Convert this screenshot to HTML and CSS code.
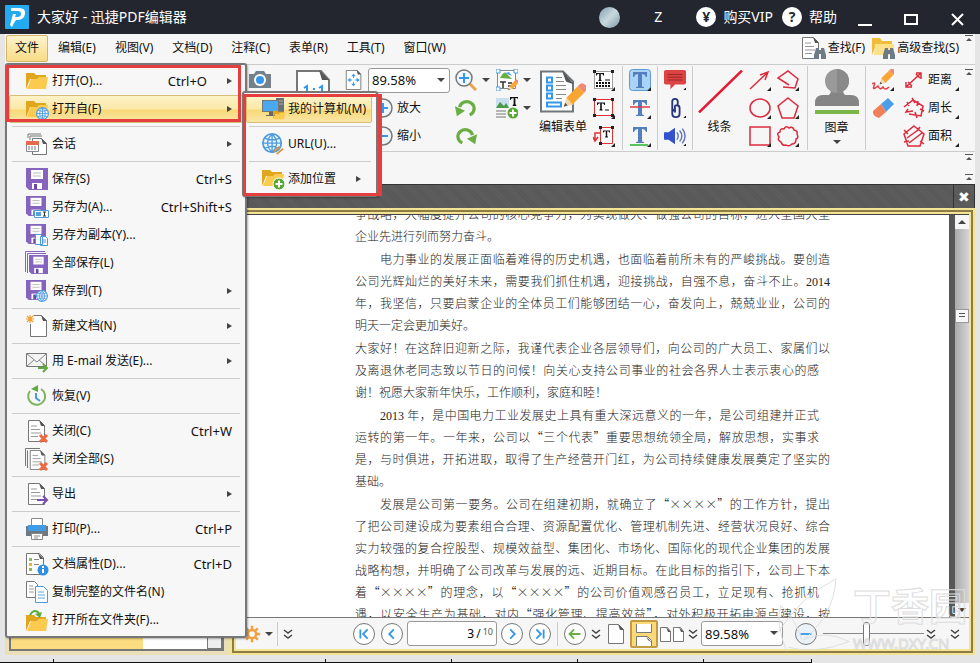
FILE: index.html
```html
<!DOCTYPE html>
<html lang="zh-CN">
<head>
  <meta charset="UTF-8" />
  <meta name="viewport" content="width=device-width, initial-scale=1.0"/>
  <title>大家好 - 迅捷PDF编辑器</title>
  <link rel="stylesheet" href="styles.css">
</head>
<body>
  <!-- shared icons -->
  <svg class="sprite" aria-hidden="true">
    <symbol id="folder" viewBox="0 0 22 22">
      <path d="M0 3h8l2 2h10v4H4L0 19z" fill="#dfa61e"/>
      <path d="M5 9h6l2-2h9l-2 12H1z" fill="#fbcb50"/>
    </symbol>
    <symbol id="globe" viewBox="0 0 22 22">
      <circle cx="11" cy="11" r="10" fill="#eef6fd" stroke="#4f9de0" stroke-width="2"/>
      <path d="M1 11h20M11 1v20M3 5.500q8 4 16 0M3 16.500q8-4 16 0M11 1q-10 10 0 20M11 1q10 10 0 20" fill="none" stroke="#4f9de0" stroke-width="1.500"/>
    </symbol>
    <symbol id="floppy" viewBox="0 0 22 22">
      <path d="M0 0h22v22H3l-3-3z" fill="#8763c0"/>
      <path d="M5 2h12v9H5z" fill="#fff"/>
      <path d="M7 5h8M7 8h8" stroke="#bbb"/>
      <path d="M6 15h10v6H6z" fill="#fff"/>
      <path d="M8 16h3v5H8z" fill="#6b47a8"/>
    </symbol>
    <symbol id="page" viewBox="0 0 22 22">
      <path d="M2.500.500h11l5 5v16h-16z" fill="#fff" stroke="#777"/>
      <path d="M13 0l6 6h-4z" fill="#555"/>
    </symbol>
    <symbol id="doc" viewBox="0 0 22 22">
      <path d="M2.500.500h11l5 5v16h-16z" fill="#fff" stroke="#777"/>
      <path d="M13 0l6 6h-4z" fill="#555"/>
      <path d="M5 6h6M5 9.500h9M5 13h10M5 16.500h7" stroke="#999"/>
    </symbol>
    <symbol id="binoculars" viewBox="0 0 12 12">
      <path d="M2 1h3v2h2V1h3l2 7v4H7V7H5v5H0V8z" fill="#6c7b87"/>
    </symbol>
    <symbol id="pencil" viewBox="0 0 22 22">
      <path d="M3 19l2-7 6 5z" fill="#f7d6a8"/>
      <path d="M5 12L14 3l5 5-9 9z" fill="#f8a532"/>
      <path d="M14 3l2-2q2-1 4 1t1 4l-2 2z" fill="#f08a78"/>
      <path d="M3 19l1-3 2 2z" fill="#555"/>
    </symbol>
    <symbol id="corner" viewBox="0 0 22 22"><path d="M22 18v4h-4z" fill="#222"/></symbol>
    <symbol id="more" viewBox="0 0 10 10">
      <path d="M1 1l4 3 4-3M1 6l4 3 4-3" fill="none" stroke="#444" stroke-width="1.500"/>
    </symbol>
    <symbol id="expand" viewBox="0 0 8 8">
      <path d="M0 .500h8" stroke="#555"/><path d="M4 3l3 3H1z" fill="#555"/>
    </symbol>
    <symbol id="bigT" viewBox="0 0 22 22">
      <path d="M4 3h14v5h-1q-1-3-4-3v12q0 1 2 1v1H7v-1q2 0 2-1V5Q6 5 5 8H4z" fill="#537fc0"/>
    </symbol>
    <symbol id="smallT" viewBox="0 0 10 10"><path d="M0 0h10v3H9Q9 1 6 1v7l1 1v1H3V9l1-1V1Q1 1 1 3H0z" fill="#111"/></symbol>
    <symbol id="rotate" viewBox="0 0 24 22">
      <path d="M5 10A8 7.500 0 1 1 16 18.500" fill="none" stroke="#6aad43" stroke-width="3.500"/>
      <path d="M0 9l2 11 9-6z" fill="#6aad43"/>
    </symbol>
  </svg>

  <div class="app">
    <header class="titlebar">
      <svg class="logo" viewBox="0 0 24 24">
        <rect width="24" height="24" rx="1" fill="#24aaf0"/>
        <path d="M6 3h8q7 0 6 6-1 6-8 6h-1l-2 3-2 4-2-2 3-11h3l-1 3h2q4 0 4-3t-3-3H6z" fill="#fff"/>
      </svg>
      <h1>大家好 - 迅捷PDF编辑器</h1>
      <span class="avatar"></span>
      <span class="user">Z</span>
      <button class="title-link"><i>¥</i>购买VIP</button>
      <button class="title-link"><i>?</i>帮助</button>
      <div class="window-buttons">
        <button aria-label="最小化"><svg viewBox="0 0 14 14"><path d="M0 13h14" stroke="#fff" stroke-width="2"/></svg></button>
        <button aria-label="最大化"><svg viewBox="0 0 14 14"><path d="M1 3h12v9H1z" fill="none" stroke="#fff" stroke-width="2"/></svg></button>
        <button aria-label="关闭"><svg viewBox="0 0 14 14"><path d="M2 2l11 11M13 2L2 13" stroke="#fff" stroke-width="2"/></svg></button>
      </div>
    </header>

    <div class="frame">
      <nav class="menubar">
        <div class="menu-root">
          <button class="active">文件</button>

          <!-- file menu -->
          <ul class="menu file-menu">
            <li><button class="item"><svg><use href="#folder"/></svg>打开(O)...<kbd class="before-arrow">Ctrl+O</kbd><b class="arrow"></b></button></li>
            <li class="has-sub">
              <button class="item selected"><svg viewBox="0 0 22 22"><use href="#folder"/><use href="#globe" x="10" y="9" width="13" height="13"/></svg>打开自(F)<b class="arrow"></b></button>
              <ul class="menu submenu">
                <li><button class="item selected"><svg viewBox="0 0 22 22"><path d="M14 0h8v14h-8z" fill="#667078"/><path d="M15 3h6M15 6h6" stroke="#aaa"/><path d="M0 2h17v12H0z" fill="#777"/><path d="M1 3h15v10H1z" fill="#4aa8f0"/><path d="M7 14h4v3h3v1H4v-1h3z" fill="#666"/><use href="#folder" x="11" y="11" width="12" height="12"/></svg>我的计算机(M)</button></li>
                <li class="sep"></li>
                <li><button class="item"><svg viewBox="0 0 24 24"><use href="#globe" width="22" height="22"/><path d="M13 20l6-5M16 23l7-6" stroke="#d9963c" stroke-width="2"/></svg>URL(U)...</button></li>
                <li class="sep"></li>
                <li><button class="item"><svg viewBox="0 0 22 22"><use href="#folder" y="-1"/><circle cx="17" cy="16" r="6" fill="#5aa637" stroke="#fff"/><path d="M17 12.500v7M13.500 16h7" stroke="#fff" stroke-width="2"/></svg>添加位置<b class="arrow"></b></button></li>
              </ul>
            </li>
            <li class="sep"></li>
            <li><button class="item"><svg viewBox="0 0 22 22"><path d="M2 5V1h13M4 7V3h12" fill="none" stroke="#777"/><path d="M6.500 5.500h9l5 5v11h-14z" fill="#fff" stroke="#777"/><path d="M15 5l6 6h-4z" fill="#555"/><path d="M.500 8.500h12v10H.500z" fill="#fff" stroke="#888"/><path d="M0 8h13v4H0z" fill="#e7694d"/><path d="M2 14h9M2 16h9" stroke="#777" stroke-dasharray="2 1"/></svg>会话<b class="arrow"></b></button></li>
            <li class="sep"></li>
            <li><button class="item"><svg><use href="#floppy"/></svg>保存(S)<kbd>Ctrl+S</kbd></button></li>
            <li><button class="item"><svg viewBox="0 0 22 22"><use href="#floppy" width="20" height="20"/><path d="M8.500 14.500h14v7h-14z" fill="#fff" stroke="#4a9adf"/><path d="M10 16h5v4h-5z" fill="#5c9fd8"/><path d="M17 16h3M18.500 16v4M17 20h3" stroke="#333"/></svg>另存为(A)...<kbd>Ctrl+Shift+S</kbd></button></li>
            <li><button class="item"><svg viewBox="0 0 22 22"><use href="#floppy" width="20" height="20"/><path d="M9.500 10.500h5l2 2v8h-7zM14.500 12.500h5l2 2v7h-7z" fill="#fff" stroke="#4a9adf"/><path d="M16 16h4M16 18h4" stroke="#4a9adf"/></svg>另存为副本(Y)...</button></li>
            <li><button class="item"><svg viewBox="0 0 22 22"><path d="M-.500 20V-.500H19M1.500 21V1.500H20" fill="none" stroke="#8763c0"/><use href="#floppy" x="3" y="3" width="19" height="19"/></svg>全部保存(L)</button></li>
            <li><button class="item"><svg viewBox="0 0 22 22"><use href="#floppy" width="20" height="20"/><use href="#globe" x="10" y="10" width="12" height="12"/></svg>保存到(T)<b class="arrow"></b></button></li>
            <li class="sep"></li>
            <li><button class="item"><svg viewBox="0 0 22 22"><use href="#page" x="2"/><circle cx="4" cy="4" r="5" fill="#f7f7f7"/><path d="M4 0v8M0 4h8M1 1l6 6M7 1L1 7" stroke="#f0a030" stroke-width="1.200"/></svg>新建文档(N)<b class="arrow"></b></button></li>
            <li class="sep"></li>
            <li><button class="item"><svg viewBox="0 0 22 22"><path d="M.500 3.500h20v13H.500z" fill="#f4f4f4" stroke="#777"/><path d="M1 4l10 8 9-8M1 16l7-6M20 16l-7-6" fill="none" stroke="#888"/><path d="M12 18h8M17 14l4 4-4 4" fill="none" stroke="#5faa3c" stroke-width="2"/></svg>用 E-mail 发送(E)...<b class="arrow"></b></button></li>
            <li class="sep"></li>
            <li><button class="item"><svg viewBox="0 0 22 22"><path d="M4 6A8.500 8.500 0 1 0 15 4" fill="none" stroke="#7db35a" stroke-width="2"/><path d="M5 4l7-4v7z" fill="#5faa3c"/><path d="M10 8v5l4 3" fill="none" stroke="#4a9adf" stroke-width="2"/></svg>恢复(V)</button></li>
            <li class="sep"></li>
            <li><button class="item"><svg viewBox="0 0 22 22"><use href="#doc"/><path d="M14 15l7 7M21 15l-7 7" stroke="#ee6840" stroke-width="3"/></svg>关闭(C)<kbd>Ctrl+W</kbd></button></li>
            <li><button class="item"><svg viewBox="0 0 22 22"><path d="M-.500 18V.500H14M1.500 20V2.500" fill="none" stroke="#777"/><use href="#doc" x="2" y="2" width="20" height="20"/><path d="M14 15l7 7M21 15l-7 7" stroke="#ee6840" stroke-width="3"/></svg>关闭全部(S)</button></li>
            <li class="sep"></li>
            <li><button class="item"><svg viewBox="0 0 22 22"><use href="#doc"/><path d="M11 17h9M17 13l4 4-4 4" fill="none" stroke="#7a4fb0" stroke-width="2"/></svg>导出<b class="arrow"></b></button></li>
            <li class="sep"></li>
            <li><button class="item"><svg viewBox="0 0 22 22"><path d="M0 8h22v10H0z" fill="#6d7880"/><path d="M5.500.500h11v7h-11z" fill="#fff" stroke="#888"/><path d="M2 7h18v6H2z" fill="#3f9ce6"/><path d="M5.500 15.500h11v6h-11z" fill="#fff" stroke="#888"/><path d="M8 18h6M8 20h4" stroke="#888"/></svg>打印(P)...<kbd>Ctrl+P</kbd></button></li>
            <li class="sep"></li>
            <li><button class="item"><svg viewBox="0 0 22 22"><path d="M.500.500h13l4 4v17H.500z" fill="#fff" stroke="#777"/><path d="M12 0l6 6h-4z" fill="#555"/><path d="M3 5h3v3H3z" fill="#8bb956"/><path d="M3 10h3v3H3z" fill="#e5b34a"/><path d="M3 15h3v3H3z" fill="#8bb956"/><path d="M8 6.500h5M8 11.500h5" stroke="#888"/><circle cx="17" cy="17" r="5.500" fill="#2f8fe0"/><path d="M17 16v4M17 13v2" stroke="#fff" stroke-width="2"/></svg>文档属性(D)...<kbd>Ctrl+D</kbd></button></li>
            <li><button class="item"><svg viewBox="0 0 22 22"><path d="M.500.500h8l3 3v13H.500z" fill="#fff" stroke="#777"/><path d="M3 5h4M3 8h5M3 11h5" stroke="#999"/><path d="M9.500 5.500h8l4 4v12h-12z" fill="#fff" stroke="#4a9adf"/><path d="M12 11h6M12 14h7M12 17h7" stroke="#5ca5e0"/></svg>复制完整的文件名(N)</button></li>
            <li><button class="item"><svg viewBox="0 0 22 22"><use href="#folder" y="3"/><path d="M4 6q4-7 9-2" fill="none" stroke="#5faa3c" stroke-width="2"/><path d="M9 5l7-2-2 6z" fill="#5faa3c"/></svg>打开所在文件夹(F)...</button></li>
          </ul>
          <span class="mark mark-file"></span>
          <span class="mark mark-sub"></span>
        </div>
        <button>编辑(E)</button>
        <button>视图(V)</button>
        <button>文档(D)</button>
        <button>注释(C)</button>
        <button>表单(R)</button>
        <button>工具(T)</button>
        <button>窗口(W)</button>
        <button class="find first"><svg viewBox="0 0 24 22"><use href="#doc" x="-2" width="22" height="22"/><use href="#binoculars" x="12" y="10" width="12" height="12"/></svg>查找(F)</button>
        <button class="find"><svg viewBox="0 0 24 22"><path d="M1 1h8l2 3h10v4H5L1 18z" fill="#f0bc3a"/><path d="M4 7h19v11H3z" fill="#fce08a"/><use href="#binoculars" x="12" y="10" width="12" height="12"/></svg>高级查找(S)</button>
        <svg class="expand"><use href="#expand"/></svg>
      </nav>

      <div class="ribbon">
        <div class="col camera">
          <button aria-label="快照"><svg viewBox="0 0 22 22"><path d="M0 5h5l2-3h8l2 3h5v14H0z" fill="#75818a"/><circle cx="11" cy="11" r="6" fill="#fff"/><circle cx="11" cy="11" r="4" fill="#3497ec"/></svg></button>
        </div>
        <div class="col actual">
          <button aria-label="实际大小"><svg viewBox="0 0 34 40"><path d="M1 1h24l8 9v29H1z" fill="#fff" stroke="#777" stroke-width="2"/><path d="M23 0l10 10h-7z" fill="#555"/><path d="M8 18l3-2v9M7 25h8M23 18l3-2v9M22 25h8M18 18v2M18 23v2" fill="none" stroke="#3497ec" stroke-width="2"/></svg></button>
        </div>
        <div class="col zoom">
          <div class="row">
            <button aria-label="适合页面"><svg viewBox="0 0 18 22"><path d="M.500.500h12l4 4v17H.500z" fill="#fff" stroke="#777"/><path d="M12 0l5 5h-4z" fill="#555"/><path d="M8.500 5v4M8.500 13v4M3 11h4M10 11h5" stroke="#3497ec"/><path d="M6 7l2.500-3L11 7zM6 15l2.500 3 2.500-3zM5 8.500L2 11l3 2.500zM12 8.500l3 2.500-3 2.500z" fill="#3497ec"/></svg></button>
            <span class="select"><select aria-label="缩放比例"><option>89.58%</option></select></span>
          </div>
          <div class="row indent"><button><svg viewBox="0 0 20 20"><circle cx="10" cy="10" r="9" fill="#eef5fb" stroke="#777" stroke-width="1.500"/><path d="M5 10h10M10 5v10" stroke="#3497ec" stroke-width="2"/></svg>放大</button></div>
          <div class="row indent"><button><svg viewBox="0 0 20 20"><circle cx="10" cy="10" r="9" fill="#eef5fb" stroke="#777" stroke-width="1.500"/><path d="M5 10h10" stroke="#3497ec" stroke-width="2"/></svg>缩小</button></div>
        </div>
        <div class="col tools">
          <button class="drop" aria-label="放大工具"><svg viewBox="0 0 22 22"><path d="M15 15l6 6" stroke="#f0a24a" stroke-width="3"/><circle cx="9" cy="9" r="8" fill="#f0f7fd" stroke="#777" stroke-width="1.500"/><path d="M4 9h10M9 4v10" stroke="#3497ec" stroke-width="2"/></svg></button>
          <button aria-label="逆时针旋转"><svg><use href="#rotate"/></svg></button>
          <button aria-label="顺时针旋转"><svg viewBox="0 0 22 22"><use href="#rotate" transform="translate(22) scale(-1 1)"/></svg></button>
        </div>
        <div class="col tools">
          <button class="drop" aria-label="编辑内容"><svg viewBox="0 0 22 22"><path d="M1.500 1.500h18v18h-18z" fill="#fff" stroke="#888"/><path d="M4 9q4-7 6-5l6 6z" fill="#6aad43"/><path d="M9 4l4-1 3 4z" fill="#4aa8f0"/><path d="M4 13h6M7 13v6M12 14h4M12 17h4" stroke="#333" stroke-width="1.500"/><path d="M0 0h4v4H0zM18 0h4v4h-4zM0 18h4v4H0z" fill="#fff" stroke="#4a9adf"/><use href="#pencil" x="10" y="10" width="14" height="13"/></svg></button>
          <button class="drop" aria-label="添加内容"><svg viewBox="0 0 22 22"><path d="M0 1h13v10H0z" fill="#c9dff0"/><path d="M0 11l4-6 4 4 2-3 3 5z" fill="#4c9a4a"/><use href="#smallT" x="14" width="9" height="9"/><path d="M0 14h10M0 17h10M0 20h10" stroke="#777"/><circle cx="17" cy="16" r="5.500" fill="#5aa637"/><path d="M17 12.500v7M13.500 16h7" stroke="#fff" stroke-width="2"/></svg></button>
        </div>
        <div class="col big">
          <button><svg viewBox="0 0 46 42"><path d="M1 1h22l10 10v30H1z" fill="#fff" stroke="#70777c" stroke-width="2"/><path d="M22 0l12 14-8-3z" fill="#555"/><path d="M7 7h5v5H7zM7 15h5v5H7zM7 23h5v5H7zM7 32h14v4H7z" fill="none" stroke="#3497ec" stroke-width="2"/><path d="M16 7h6M16 11h8M16 15h10M16 19h10M16 24h10M16 28h6" stroke="#888"/><use href="#pencil" x="20" y="12" width="28" height="28"/></svg>编辑表单</button>
        </div>
        <div class="col icons typing">
          <button aria-label="打字机"><svg viewBox="0 0 22 22"><path d="M1.500 2.500h18v17h-18z" fill="#fff" stroke="#444" stroke-dasharray="1 1"/><use href="#smallT" x="3" y="4" width="8" height="8"/><path d="M12 11h5" stroke="#111"/><path d="M3 14h15M3 17h15" stroke="#111" stroke-width="2" stroke-dasharray="2 1"/><path d="M0 1h3v3H0zM18 1h3v3h-3z" fill="#222"/><use href="#corner"/></svg></button>
          <button aria-label="文本框"><svg viewBox="0 0 22 22"><path d="M1.500 2.500h18v16h-18z" fill="#fff" stroke="#d33"/><use href="#smallT" x="4" y="5" width="8" height="9"/><path d="M12 13h4" stroke="#111"/><path d="M0 1h3v3H0zM18 1h3v3h-3zM0 17h3v3H0zM18 17h3v3h-3z" fill="#222"/><use href="#corner"/></svg></button>
          <button aria-label="标注"><svg viewBox="0 0 22 22"><path d="M7.500 2.500h12v16h-12z" fill="#fff" stroke="#d33"/><use href="#smallT" x="10" y="5" width="7" height="8"/><path d="M7 8H2v8M0 12l2 4 3-4" fill="none" stroke="#d33" stroke-width="1.500"/><path d="M6 1h3v3H6zM18 1h3v3h-3zM6 17h3v3H6z" fill="#222"/><use href="#corner"/></svg></button>
        </div>
        <div class="col icons line-left">
          <button aria-label="高亮"><svg viewBox="0 0 22 22"><rect x=".500" y=".500" width="21" height="21" rx="3" fill="#a9d4f8" stroke="#5c9bd5"/><use href="#bigT"/><use href="#corner"/></svg></button>
          <button aria-label="删除线"><svg viewBox="0 0 22 22"><use href="#bigT"/><path d="M1 10h20" stroke="#e13c44" stroke-width="1.500"/><use href="#corner"/></svg></button>
          <button aria-label="下划线"><svg viewBox="0 0 22 22"><use href="#bigT" y="-1"/><path d="M1 20h18" stroke="#58c45c" stroke-width="2"/><use href="#corner"/></svg></button>
        </div>
        <div class="col icons line-left">
          <button aria-label="注释"><svg viewBox="0 0 24 22"><path d="M2 0h20q2 0 2 2v12q0 2-2 2H12l-5 5v-5H2q-2 0-2-2V2q0-2 2-2z" fill="#dc4343"/><path d="M4 5h16M4 8h16M4 11h16" stroke="#932525"/><use href="#corner" x="2"/></svg></button>
          <button aria-label="附件"><svg viewBox="0 0 24 22"><path d="M15 8V4q0-3-3-3T9 4v7q0 3 3 3M9 11v6q0 4 4 4t4-4v-6q0-3-3-3t-2 3v5" fill="none" stroke="#24357f" stroke-width="2"/><use href="#corner" x="2"/></svg></button>
          <button aria-label="声音"><svg viewBox="0 0 24 22"><path d="M0 7h5l7-5v18l-7-5H0z" fill="#3350d0"/><path d="M14 7q3 4 0 8M17 5q5 6 0 12M20 3q6 8 0 16" fill="none" stroke="#5b6fc0" stroke-width="1.500"/><use href="#corner" x="2"/></svg></button>
        </div>
        <div class="col big shapes line-left">
          <button><svg viewBox="0 0 46 42"><path d="M2 42L45 0" stroke="#e11d35" stroke-width="2.500"/></svg>线条</button>
        </div>
        <div class="col icons red">
          <button aria-label="箭头"><svg viewBox="0 0 22 22"><path d="M1 20L19 3M11 6l8-3-3 8" /><use href="#corner"/></svg></button>
          <button aria-label="椭圆"><svg viewBox="0 0 22 22"><ellipse cx="11" cy="11" rx="10" ry="9"/><use href="#corner"/></svg></button>
          <button aria-label="矩形"><svg viewBox="0 0 22 22"><path d="M1 2h20v18H1z"/><use href="#corner"/></svg></button>
        </div>
        <div class="col icons red">
          <button aria-label="折线"><svg viewBox="0 0 22 22"><path d="M12 16L1 9l10-7 10 8-3 9-12-1"/><use href="#corner"/></svg></button>
          <button aria-label="多边形"><svg viewBox="0 0 22 22"><path d="M11 1l10 8-4 12H5L1 9z"/><use href="#corner"/></svg></button>
          <button aria-label="云形"><svg viewBox="0 0 22 22"><path d="M7 4q2-4 5-1 4-2 5 2 4 1 3 4 2 4-1 5 0 5-4 5-3 3-6 1-4 1-5-3-4-2-2-5-3-4 1-5 0-4 4-3z"/><use href="#corner"/></svg></button>
        </div>
        <div class="col big stamp line-left">
          <button><svg viewBox="0 0 46 48"><path d="M1 35q0-8 8-8h6q3-3 1-8h14q-2 5 1 8h6q8 0 8 8v3H1z" fill="#858585"/><circle cx="23" cy="13" r="12" fill="#999"/><path d="M23 1a12 12 0 0 1 0 24z" fill="#8a8a8a"/><path d="M1 42h44v4H1z" fill="#7ab648"/></svg>图章<b class="down"></b></button>
        </div>
        <div class="col icons line-left pencils">
          <button aria-label="铅笔"><svg viewBox="0 0 22 22"><path d="M0 15q4-3 2 2t4 0q2 5 5 1 2 4 6 0" fill="none" stroke="#e13c44" stroke-width="1.500"/><use href="#pencil" x="5" y="-1" width="19" height="19"/><use href="#corner"/></svg></button>
          <button aria-label="橡皮擦"><svg viewBox="0 0 22 22"><path d="M9 7l7-6 6 6-8 8z" fill="#4a9fe8"/><path d="M9 7l5 8-7 6q-7-2-6-7z" fill="#f0805a"/></svg></button>
        </div>
        <div class="col measure red">
          <button><svg viewBox="0 0 22 22"><path d="M3 18L18 4M3 13v5h6M13 4h5v6M5 13l4 4M13 5l4 4"/></svg>距离</button>
          <button><svg viewBox="0 0 22 22"><path d="M1 10l9-7 10 6-2 10-12-2M6 9l-2-4M9 1l3 5M15 4l-1 5M17 12l4 2M12 15l2 6M5 12l-2 3 7-1"/></svg>周长</button>
          <button><svg viewBox="0 0 22 22"><path d="M11 1l10 8-4 12H5L1 9zM4 13l11-8M6 18L19 8M1 5l4 4M17 2l-3 4M1 17l5-1M17 16l4 3"/></svg>面积</button>
        </div>
        <svg class="expand"><use href="#expand"/></svg>
      </div>

      <div class="toolbar-space">
        <svg class="expand"><use href="#expand"/></svg>
        <svg class="expand"><use href="#expand"/></svg>
      </div>

      <div class="tabs"><button aria-label="关闭标签">✖</button></div>

      <main class="workspace">
        <aside class="panel">
          <div class="panel-scroll"><span></span><button aria-label="更多"></button></div>
        </aside>
        <section class="view">
          <div class="view-inner">
            <div class="document">
              <article class="page" lang="zh-CN">
                <p>
                  <span>争战略，大幅度提升公司的核心竞争力，为实现做大、做强公司的目标，进入全国大型</span>
                  <span class="last">企业先进行列而努力奋斗。</span>
                </p>
                <p class="indent">
                  <span>电力事业的发展正面临着难得的历史机遇，也面临着前所未有的严峻挑战。要创造</span>
                  <span>公司光辉灿烂的美好未来，需要我们抓住机遇，迎接挑战，自强不息，奋斗不止。<em>2014</em></span>
                  <span>年，我坚信，只要启蒙企业的全体员工们能够团结一心，奋发向上，兢兢业业，公司的</span>
                  <span class="last">明天一定会更加美好。</span>
                </p>
                <p>
                  <span>大家好！在这辞旧迎新之际，我谨代表企业各层领导们，向公司的广大员工、家属们以</span>
                  <span class="short">及离退休老同志致以节日的问候！向关心支持公司事业的社会各界人士表示衷心的感</span>
                  <span class="last">谢！祝愿大家新年快乐，工作顺利，家庭和睦！</span>
                </p>
                <p class="indent">
                  <span class="short"><em>2013</em> 年，是中国电力工业发展史上具有重大深远意义的一年，是公司组建并正式</span>
                  <span class="short">运转的第一年。一年来，公司以“三个代表”重要思想统领全局，解放思想，实事求</span>
                  <span>是，与时俱进，开拓进取，取得了生产经营开门红，为公司持续健康发展奠定了坚实的</span>
                  <span class="last">基础。</span>
                </p>
                <p class="indent">
                  <span>发展是公司第一要务。公司在组建初期，就确立了“××××”的工作方针，提出</span>
                  <span>了把公司建设成为要素组合合理、资源配置优化、管理机制先进、经营状况良好、综合</span>
                  <span>实力较强的复合控股型、规模效益型、集团化、市场化、国际化的现代企业集团的发展</span>
                  <span>战略构想，并明确了公司改革与发展的远、近期目标。在此目标的指引下，公司上下本</span>
                  <span class="short">着“××××”的理念，以“××××”的公司价值观感召员工，立足现有、抢抓机</span>
                  <span>遇，以安全生产为基础，对内“强化管理、提高效益”，对外积极开拓电源点建设，按</span>
                </p>
              </article>
              <div class="scrollbar">
                <button class="up" aria-label="向上"></button>
                <span class="thumb"></span>
                <button class="dn" aria-label="向下"></button>
              </div>
            </div>

            <footer class="status">
              <button class="gear" aria-label="选项"><svg viewBox="0 0 22 22"><circle cx="11" cy="11" r="5" fill="none" stroke="#f0a040" stroke-width="3"/><path d="M11 1v4M11 17v4M1 11h4M17 11h4M4 4l3 3M15 15l3 3M18 4l-3 3M7 15l-3 3" stroke="#f0a040" stroke-width="3"/></svg><b class="down"></b></button>
              <button class="more line-left" aria-label="更多"><svg><use href="#more"/></svg></button>
              <div class="pager">
                <button class="round" aria-label="首页"><svg viewBox="0 0 22 22"><path d="M7 6v10M15 6l-5 5 5 5"/></svg></button>
                <button class="round" aria-label="上一页"><svg viewBox="0 0 22 22"><path d="M13 6l-5 5 5 5"/></svg></button>
                <label class="page-box"><input type="text" value="3" aria-label="页码"><span>/</span><sup>10</sup></label>
                <button class="round" aria-label="下一页"><svg viewBox="0 0 22 22"><path d="M9 6l5 5-5 5"/></svg></button>
                <button class="round" aria-label="末页"><svg viewBox="0 0 22 22"><path d="M15 6v10M7 6l5 5-5 5"/></svg></button>
              </div>
              <div class="back line-left">
                <button class="round green" aria-label="后退"><svg viewBox="0 0 22 22"><path d="M5 11h12M10 6l-5 5 5 5"/></svg></button>
                <button class="more" aria-label="更多"><svg><use href="#more"/></svg></button>
              </div>
              <div class="layouts">
                <button aria-label="单页"><svg viewBox="0 0 16 22"><path d="M.500 1.500h10l5 5v14H.500z" fill="#fff" stroke="#777"/><path d="M10 1l6 6h-4z" fill="#555"/></svg></button>
                <button class="on" aria-label="连续"><svg viewBox="0 0 18 22"><path d="M1.500 0v8.500h15V0M1.500 22v-9.500h11l4 4V22" fill="#fff" stroke="#777"/><path d="M11 12l6 7-4-3z" fill="#555"/></svg></button>
                <button aria-label="双页"><svg viewBox="0 0 24 22"><path d="M.500 4.500h7l3 4v10H.500zM13.500 4.500h7l3 4v10h-10z" fill="#fff" stroke="#777"/><path d="M6 4l5 5H8zM19 4l5 5h-3z" fill="#555"/></svg></button>
                <button class="more" aria-label="更多"><svg><use href="#more"/></svg></button>
              </div>
              <span class="select"><select aria-label="缩放"><option>89.58%</option></select></span>
              <button class="round minus" aria-label="缩小"><svg viewBox="0 0 22 22"><path d="M5 11h12"/></svg></button>
              <input class="slider" type="range" min="0" max="100" value="43" aria-label="缩放滑块">
              <button class="more" aria-label="更多"><svg><use href="#more"/></svg></button>
              <button class="more far" aria-label="更多"><svg><use href="#more"/></svg></button>
            </footer>
          </div>
        </section>
        <div class="watermark">
          <svg viewBox="0 0 80 80"><path d="M0 60Q25 20 62 2 60 40 28 66 50 55 76 68 40 82 12 74M10 78Q-2 48 4 30 20 45 26 66" fill="none" stroke="#ddd"/></svg>
          <div><strong>丁香园</strong><small>WWW.DXY.CN</small></div>
        </div>
      </main>

      <div class="ruler"><i></i><i></i><i></i><i></i><i></i><i></i></div>
    </div>
  </div>
</body>
</html>
```
FILE: styles.css
```css
* {
  box-sizing: border-box;
}
body {
  margin: 0;
  font: 12px/18px "Noto Sans", "Noto Sans CJK SC", sans-serif;
  color: #111;
  background: #e9e9e9;
}
button {
  font: inherit;
  color: inherit;
  background: none;
  border: none;
  padding: 0;
  margin: 0;
  white-space: nowrap;
}
svg {
  display: block;
  flex: none;
}
.sprite {
  position: absolute;
  width: 0;
  height: 0;
}
.app {
  height: 100vh;
  display: flex;
  flex-direction: column;
  overflow: hidden;
}

/* title bar */
.titlebar {
  height: 34px;
  flex: none;
  display: flex;
  align-items: center;
  padding: 0 16px 0 5px;
  background: #23262f;
  color: #fff;
  font-size: 14px;
}
.logo {
  width: 24px;
  height: 24px;
}
.titlebar h1 {
  flex: 1;
  margin: 0 0 0 8px;
  font-size: 14px;
  font-weight: normal;
}
.avatar {
  width: 21px;
  height: 21px;
  border-radius: 50%;
  background: linear-gradient(135deg, #7f9db0, #c9d8de 50%, #7c98a8);
}
.user {
  width: 76px;
  text-align: center;
}
.title-link {
  display: flex;
  align-items: center;
  gap: 7px;
  margin-right: 9px;
}
.title-link i {
  width: 20px;
  height: 20px;
  border-radius: 50%;
  background: #fff;
  color: #23262f;
  font-style: normal;
  font-weight: bold;
  line-height: 20px;
}
.window-buttons {
  display: flex;
  gap: 32px;
  margin: 4px 0 0 12px;
}
.window-buttons svg {
  width: 14px;
  height: 14px;
}

.frame {
  flex: 1;
  min-height: 0;
  display: flex;
  flex-direction: column;
  padding: 0 5px;
  background: #e5e5e5;
}

/* menu bar */
.menubar {
  height: 31px;
  flex: none;
  display: flex;
  align-items: center;
  gap: 1px;
  padding: 0 2px 2px 1px;
  background: #f6f6f6;
  border-bottom: 1px solid #ccc;
}
.menubar > button,
.menu-root > button {
  height: 27px;
  padding: 0 9px;
}
.menu-root {
  position: relative;
}
.menu-root > .active {
  border: 1px solid #d4b56a;
  border-radius: 2px;
  padding: 0 8px;
  background: linear-gradient(#fdf3cd, #f8dc85);
}
.menubar > .find {
  display: flex;
  align-items: center;
  gap: 2px;
  padding: 0 0 0 5px;
}
.menubar > .first {
  margin-left: auto;
}
.find svg {
  width: 24px;
  height: 22px;
}
.expand {
  width: 8px;
  height: 8px;
}
.menubar .expand {
  margin: 0 0 18px 5px;
}

/* drop-down menus */
.menu {
  position: absolute;
  z-index: 5;
  margin: 0;
  padding: 2px;
  list-style: none;
  background: #f7f7f7;
  border: 2px solid #777;
  border-radius: 3px;
  box-shadow: 1px 1px 2px rgba(0,0,0,0.3);
}
.file-menu {
  top: 28px;
  left: -1px;
  width: 242px;
}
.has-sub {
  position: relative;
}
.submenu {
  top: -4px;
  left: 233px;
  width: 136px;
}
.item {
  display: flex;
  align-items: center;
  width: 100%;
  height: 28px;
  padding: 0 10px 0 16px;
  border: 1px solid transparent;
}
.submenu .item {
  padding-left: 15px;
  width: 126px;
}
.item svg {
  width: 22px;
  height: 22px;
  margin-right: 4px;
  overflow: visible;
}
.item.selected {
  border-color: #d9bf75;
  border-radius: 2px;
  background: linear-gradient(#fdf3ca, #fbe8a6 50%, #f7d978 54%, #fae6a6);
}
.item kbd {
  font: inherit;
  font-size: 13px;
  margin-left: auto;
}
.item .before-arrow {
  margin-right: 20px;
}
.arrow {
  margin-left: auto;
  border: 3px solid transparent;
  border-left: 5px solid #444;
  border-right: none;
}
.before-arrow + .arrow {
  margin-left: 0;
}
.sep {
  height: 7px;
  padding: 3px 3px;
}
.sep::before {
  content: "";
  display: block;
  height: 1px;
  background: #ccc;
}
.mark {
  position: absolute;
  z-index: 6;
  border: 3px solid #e53e3e;
  pointer-events: none;
}
.mark-file {
  top: 30px;
  left: 0;
  width: 235px;
  height: 57px;
}
.mark-sub {
  top: 59px;
  left: 237px;
  width: 139px;
  height: 102px;
  border-right-width: 4px;
}

/* ribbon */
.ribbon {
  height: 87px;
  flex: none;
  display: flex;
  padding: 1px 2px 1px 241px;
  background: #f6f6f6;
  border-bottom: 1px solid #ccc;
}
.col {
  display: grid;
  grid-template-rows: 28px 28px 28px;
  align-items: center;
  justify-items: center;
}
.line-left {
  border-left: 1px solid #ccc;
}
.col svg {
  width: 22px;
  height: 22px;
}
.camera {
  width: 50px;
  justify-items: start;
  padding-left: 3px;
}
.actual {
  width: 44px;
  align-items: start;
  justify-items: start;
}
.actual button {
  grid-row: span 3;
  padding-top: 4px;
}
.actual svg {
  width: 34px;
  height: 40px;
}
.zoom {
  width: 113px;
  padding-left: 4px;
  justify-items: start;
}
.row,
.row button {
  display: flex;
  align-items: center;
  gap: 4px;
}
.zoom .indent {
  padding-left: 29px;
}
.row svg {
  width: 20px;
  height: 20px;
}
.select {
  position: relative;
}
.select select {
  display: block;
  appearance: none;
  width: 82px;
  height: 25px;
  padding: 0 3px;
  font: 13px "Noto Sans", sans-serif;
  color: #111;
  background: #fff;
  border: 1px solid #999;
  border-radius: 3px;
}
.select::after {
  content: "";
  position: absolute;
  top: 10px;
  right: 5px;
}
.select::after,
.drop::after,
.down {
  border: 4px solid transparent;
  border-top-color: #444;
  border-bottom: none;
}
.tools {
  width: 41px;
  padding-left: 2px;
  justify-items: start;
}
.tools button {
  display: flex;
  align-items: center;
  gap: 5px;
}
.drop::after {
  content: "";
}
.big {
  width: 56px;
}
.big button {
  grid-row: span 3;
  align-self: start;
  display: flex;
  flex-direction: column;
  align-items: center;
  gap: 5px;
  padding-top: 4px;
}
.big svg {
  width: 46px;
  height: 43px;
}
.shapes {
  width: 54px;
}
.icons {
  width: 29px;
}
.typing {
  width: 31px;
  justify-items: start;
  padding-left: 2px;
}
.icons.line-left {
  width: 35px;
}
.icons.red {
  width: 28px;
}
.red path,
.red ellipse {
  fill: none;
  stroke: #dc2a3c;
  stroke-width: 1.5;
}
.stamp {
  width: 58px;
  margin-left: 5px;
}
.stamp button {
  gap: 3px;
  padding-top: 2px;
}
.stamp svg {
  height: 48px;
}
.measure {
  width: 62px;
}
.measure button {
  display: flex;
  align-items: center;
  gap: 3px;
}
.measure button::after {
  content: "";
  align-self: flex-end;
  border: 2px solid #222;
  border-top-color: transparent;
  border-left-color: transparent;
}
.ribbon .expand {
  margin: 3px 0 0 auto;
}
.toolbar-space {
  height: 32px;
  flex: none;
  display: flex;
  flex-direction: column;
  justify-content: space-between;
  align-items: flex-end;
  padding: 2px 2px;
  background: #f6f6f6;
}
.tabs {
  height: 24px;
  flex: none;
  display: flex;
  justify-content: flex-end;
  background: repeating-linear-gradient(45deg, #575757 0 1px, #5e5e5e 1px 2px);
  border-top: 1px solid #333;
}
.tabs button {
  width: 22px;
  border-left: 1px solid #333;
  border-right: 1px solid #333;
  color: #fff;
  font-size: 14px;
}

/* workspace */
.workspace {
  flex: 1;
  min-height: 0;
  position: relative;
  display: flex;
}
.panel {
  width: 225px;
  flex: none;
  display: flex;
  align-items: flex-end;
  padding: 0 6px 4px 4px;
  background: #eadfb8;
}
.panel-scroll {
  flex: 1;
  display: flex;
  height: 16px;
  background: #fff;
  border: 2px solid #777;
}
.panel-scroll span {
  width: 132px;
  background: #fbdc80;
}
.panel-scroll button {
  width: 15px;
  margin-left: auto;
  border: 1px solid #777;
  background: #eee;
}
.view {
  flex: 1;
  min-width: 0;
  padding: 2px;
  background: #8d7d45;
  border: 2px solid #f3e395;
}
.view-inner {
  height: 100%;
  display: flex;
  flex-direction: column;
  border: 2px solid #f3e395;
}
.document {
  flex: 1;
  min-height: 0;
  display: flex;
  background: #575757;
  border-top: 1px solid #444;
  border-bottom: 1px solid #777;
}
.page {
  flex: 1;
  margin-right: 6px;
  padding-left: 119px;
  overflow: hidden;
  background: #fff;
  color: #222;
  font-family: "Noto Sans CJK SC", sans-serif;
  font-weight: 300;
  line-height: 22px;
}
.page p {
  width: 475px;
  margin: 0 0 1px;
}
.page p:first-child {
  margin-top: -12px;
}
.page span {
  display: block;
  white-space: nowrap;
  text-align-last: justify;
}
.page .indent span:first-child {
  padding-left: 25px;
}
.page .short {
  margin-right: 11px;
}
.page .last {
  text-align-last: left;
}
.page em {
  font-family: "Liberation Serif", serif;
  line-height: 20px;
  font-style: normal;
}
.scrollbar {
  width: 14px;
  display: flex;
  flex-direction: column;
  justify-content: space-between;
  background: linear-gradient(90deg, #aaa, #d5d5d5);
}
.scrollbar button {
  height: 14px;
  background: #f6f6f6;
}
.scrollbar button::after {
  content: "";
  display: block;
  width: 0;
  margin: 0 auto;
  border: 4px solid transparent;
}
.scrollbar .up::after {
  border-bottom-color: #444;
  border-top: none;
}
.scrollbar .dn::after {
  border-top-color: #444;
  border-bottom: none;
}
.thumb {
  height: 14px;
  margin-bottom: 200px;
  padding: 3px;
  background: repeating-linear-gradient(#555 0 1px, #f6f6f6 1px 3px) content-box, #f6f6f6;
  border: 1px solid #999;
}

/* status bar */
.status {
  height: 31px;
  flex: none;
  display: flex;
  align-items: center;
  padding: 0 9px 0 5px;
  background: #f6f6f6;
}
.gear {
  display: flex;
  align-items: center;
  gap: 2px;
  width: 36px;
}
.gear svg {
  width: 22px;
  height: 18px;
}
.more svg {
  width: 10px;
  height: 10px;
}
.more.line-left {
  height: 24px;
  padding-left: 5px;
}
.pager,
.back,
.layouts {
  display: flex;
  align-items: center;
}
.pager {
  gap: 6px;
  margin-left: 60px;
}
.round {
  width: 22px;
  height: 22px;
  border: 1px solid #777;
  border-radius: 50%;
  background: #fff;
}
.round svg {
  width: 20px;
  height: 20px;
}
.round path {
  fill: none;
  stroke: #3497ec;
  stroke-width: 2;
}
.green path {
  stroke: #6aad43;
}
.page-box {
  width: 90px;
  height: 25px;
  margin: 0 -2px;
  display: flex;
  align-items: center;
  padding-right: 3px;
  background: #fff;
  border: 1px solid #999;
  border-radius: 3px;
}
.page-box input {
  flex: 1;
  min-width: 0;
  padding: 0;
  border: none;
  text-align: right;
  font: inherit;
}
.page-box span {
  margin: 0 2px;
}
.page-box sup {
  font-size: 9px;
  line-height: 20px;
  color: #555;
  align-self: flex-start;
}
.back {
  height: 24px;
  gap: 5px;
  margin-left: 6px;
  padding-left: 6px;
}
.layouts {
  gap: 4px;
  margin: 0 3px 0 7px;
}
.layouts > button:first-child svg {
  width: 16px;
  height: 22px;
}
.layouts .on {
  display: flex;
  justify-content: center;
  width: 28px;
  height: 28px;
  margin: 0 -2px 0 2px;
  padding-top: 2px;
  border: 2px solid #c39a45;
  border-radius: 2px;
  background: #fbd979;
}
.layouts .on svg {
  width: 18px;
  height: 22px;
}
.layouts button:nth-child(3) svg {
  width: 24px;
  height: 22px;
}
.minus {
  margin: 0 4px 0 12px;
  background: #eaf2f9;
}
.slider {
  flex: 1;
  min-width: 60px;
  height: 26px;
  margin: 0 2px;
  appearance: none;
  background: linear-gradient(#888, #888) center / 100% 1px no-repeat;
}
.slider::-webkit-slider-thumb {
  appearance: none;
  width: 7px;
  height: 24px;
  border: 1px solid #777;
  border-radius: 3px;
  background: #fff;
}
.far {
  margin-left: 14px;
}

/* watermark */
.watermark {
  position: absolute;
  right: 8px;
  bottom: 2px;
  display: flex;
  align-items: flex-end;
  pointer-events: none;
}
.watermark svg {
  width: 76px;
  height: 76px;
}
.watermark strong,
.watermark small {
  display: block;
  color: transparent;
  -webkit-text-stroke: 1px #ddd;
}
.watermark strong {
  font-size: 38px;
  line-height: 56px;
}
.watermark small {
  font-size: 15px;
  line-height: 20px;
}

/* bottom ruler */
.ruler {
  height: 8px;
  flex: none;
  display: flex;
  align-items: flex-end;
  margin-left: -5px;
}
.ruler i {
  height: 4px;
  flex: 123 0 0;
  border-right: 1px solid #111;
  border-bottom: 1px solid #111;
}
.ruler i:first-child {
  flex-grow: 52;
}
.ruler i:nth-child(2) {
  flex-grow: 268;
}
.ruler i:last-child {
  flex-grow: 106;
  margin-right: 163px;
}
```
